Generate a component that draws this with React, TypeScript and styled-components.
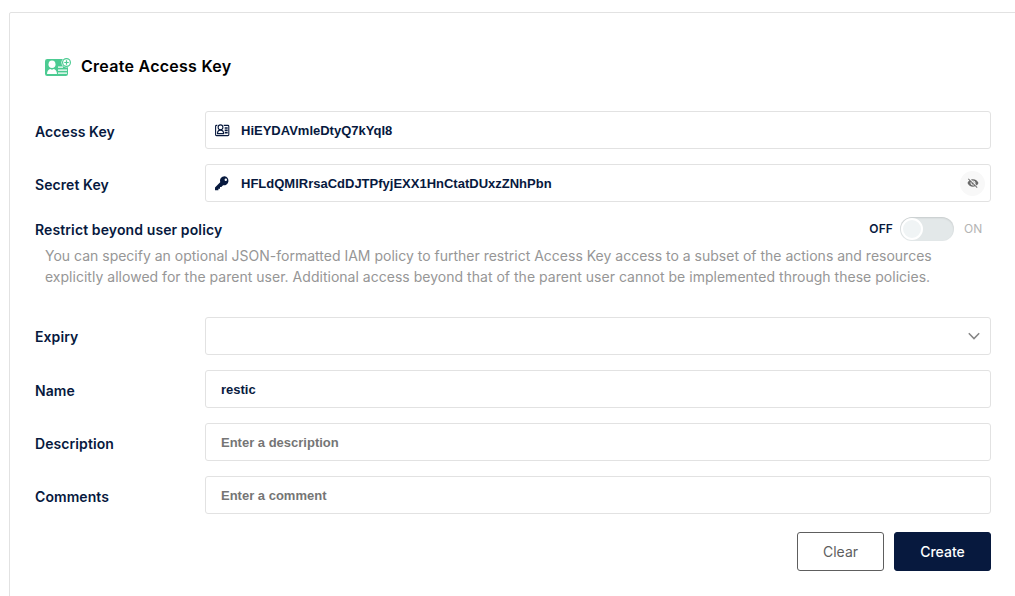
import React from "react";
import styled, { createGlobalStyle } from "styled-components";

const Global = createGlobalStyle`
  * { box-sizing: border-box; }
  html, body { margin: 0; background: #fff; overflow: hidden; }
  body { font-family: Inter, "Liberation Sans", sans-serif; color: #07193e; }
`;

const Page = styled.main`
  height: 596px;
  padding: 12px 0 0 9px;
  overflow: hidden;
`;

const Card = styled.section`
  width: 1100px;
  height: 640px;
  padding: 38px 0 0 25px;
  border: 1px solid #e2e2e2;
  border-radius: 2px;
`;

const Form = styled.form`
  width: 956px;
`;

const Title = styled.h1`
  display: flex;
  align-items: center;
  gap: 10px;
  height: 30px;
  margin: 0 0 30px;
  padding-left: 10px;
  font-size: 16px;
  font-weight: 600;
  letter-spacing: 0.27px;
  color: #000;
`;

const TitleIcon = styled.svg`
  margin-top: 2px;
`;

const Field = styled.div`
  display: flex;
  align-items: center;
  height: 38px;
  margin-bottom: 15px;
`;

const Label = styled.label<{ $raised?: boolean }>`
  width: 170px;
  padding-top: ${(p) => (p.$raised ? 1 : 3)}px;
  font-size: 14px;
  line-height: 20px;
  font-weight: 600;
  letter-spacing: 0.08px;
`;

const Box = styled.div<{ $icon?: boolean }>`
  flex: 1;
  display: flex;
  align-items: center;
  height: 38px;
  padding: 0 5px 0 ${(p) => (p.$icon ? 9 : 15)}px;
  border: 1px solid #e2e2e2;
  border-radius: 3px;
`;

const Input = styled.input<{ $indent?: boolean }>`
  flex: 1;
  min-width: 0;
  height: 20px;
  margin: 0 0 0 ${(p) => (p.$indent ? 11 : 0)}px;
  padding: 0;
  border: 0;
  outline: 0;
  background: transparent;
  color: #07193e;
  font: 600 13px "Liberation Sans", Arial, sans-serif;
  &::placeholder { color: #757575; opacity: 1; }
`;

const EyeButton = styled.button`
  display: flex;
  align-items: center;
  justify-content: center;
  width: 25px;
  height: 25px;
  padding: 0;
  border: 0;
  border-radius: 50%;
  background: #f8f8f8;
  color: #6b6b6b;
`;

const Chevron = styled.svg`
  margin: 0 5px 0 auto;
`;

const PolicyRow = styled.div`
  display: flex;
  align-items: center;
  height: 24px;
  font-size: 14px;
  font-weight: 600;
`;

const PolicyLabel = styled.span`
  flex: 1;
  padding-top: 1px;
  letter-spacing: 0.11px;
`;

const State = styled.span<{ $active?: boolean }>`
  padding-bottom: 1px;
  font-size: 12px;
  line-height: 15px;
  letter-spacing: 0.1px;
  font-weight: ${(p) => (p.$active ? 600 : 400)};
  color: ${(p) => (p.$active ? "#07193e" : "#b4b4b4")};
`;

const Switch = styled.button`
  display: flex;
  align-items: center;
  width: 54px;
  height: 24px;
  margin: 0 10px 0 7px;
  padding: 0 1px;
  border: 0;
  border-radius: 12px;
  background: #e3e8e9;
  box-shadow: inset 0 1px 2px rgba(0, 0, 0, 0.13);
`;

const Thumb = styled.span`
  width: 22px;
  height: 22px;
  border: 2px solid #fff;
  border-radius: 50%;
  background: #f0f4f5;
`;

const OnSlot = styled.div`
  display: flex;
  width: 27px;
`;

const Help = styled.p`
  height: 72px;
  margin: 4px 0 0;
  padding: 0 0 0 10px;
  color: #969696;
  font-size: 14px;
  line-height: 21px;
`;

const HelpLine = styled.span<{ $wide?: boolean }>`
  display: block;
  white-space: nowrap;
  letter-spacing: ${(p) => (p.$wide ? "0.02px" : "normal")};
`;

const Actions = styled.div`
  display: flex;
  justify-content: flex-end;
  gap: 10px;
  padding-top: 3px;
`;

const Button = styled.button<{ $primary?: boolean }>`
  width: ${(p) => (p.$primary ? 97 : 87)}px;
  height: 39px;
  padding: 0;
  border: 1px solid ${(p) => (p.$primary ? "#07193e" : "#5e5e5e")};
  border-radius: 3px;
  background: ${(p) => (p.$primary ? "#07193e" : "#fff")};
  color: ${(p) => (p.$primary ? "#fff" : "#5e5e5e")};
  font-family: inherit;
  font-size: 14px;
  font-weight: ${(p) => (p.$primary ? 500 : 400)};
`;

const CreateKeyIcon = () => (
  <TitleIcon width="26" height="20" viewBox="0 0 26 20">
    <rect y="2" width="23" height="17" rx="2.2" fill="#4ccb92" />
    <circle cx="21.5" cy="5.5" r="5.1" fill="#fff" />
    <circle cx="21.5" cy="5.5" r="3.9" fill="none" stroke="#4ccb92" strokeWidth="1.2" />
    <path d="M21.5 3.3v4.4M19.3 5.5h4.4" stroke="#4ccb92" strokeWidth="1.2" />
    <ellipse cx="7" cy="7.2" rx="3.5" ry="3.8" fill="#fff" />
    <path d="M2 17c0-2.9 1.7-4.7 3.2-4.9l1.8.7 1.8-.7c1.5.2 3.2 2 3.2 4.9z" fill="#fff" />
    <path d="M13 10.2h5M13 13.2h9M13 16.2h9" stroke="#fff" strokeWidth="1.3" />
  </TitleIcon>
);

const CardIcon = () => (
  <svg width="15" height="13" viewBox="0 0 15 13" fill="none" stroke="#07193e">
    <path d="M2.3 1.4h-.8q-.9 0-.9.9v8.4q0 .9.9.9h11.4q.9 0 .9-.9V2.3q0-.9-.9-.9H8.7" strokeWidth="1.1" />
    <circle cx="5.5" cy="3.3" r="2.4" strokeWidth="1.1" />
    <path d="M2.5 9.6c0-2.2 1-3.5 3-3.5s3.1 1.3 3.1 3.5z" strokeWidth="1.1" />
    <path d="M9.7 4h3M9.7 6.4h3M9.7 8.8h3" strokeWidth="1.6" />
  </svg>
);

const KeyIcon = () => (
  <svg width="15" height="15" viewBox="0 0 15 15">
    <path
      fillRule="evenodd"
      fill="#07193e"
      d="M9.6.2A4.6 4.6 0 0 0 5.2 6.3L0 11.5v2.8h3.4v-1.6H5v-1.6h1.3l1.8-1.8A4.6 4.6 0 1 0 9.6.2m1.2 2.4a1.2 1.2 0 1 1 0 2.4 1.2 1.2 0 0 1 0-2.4"
    />
  </svg>
);

const EyeOffIcon = () => (
  <svg width="12" height="12" viewBox="0 0 24 24" fill="currentColor">
    <path d="M12 7c2.76 0 5 2.24 5 5 0 .65-.13 1.26-.36 1.83l2.92 2.92c1.51-1.26 2.7-2.89 3.43-4.75-1.73-4.39-6-7.5-11-7.5-1.4 0-2.74.25-3.98.7l2.16 2.16C10.74 7.13 11.35 7 12 7zM2 4.27l2.28 2.28.46.46C3.08 8.3 1.78 10.02 1 12c1.73 4.39 6 7.5 11 7.5 1.55 0 3.03-.3 4.38-.84l.42.42L19.73 22 21 20.73 3.27 3 2 4.27zM7.53 9.8l1.55 1.55c-.05.21-.08.43-.08.65 0 1.66 1.34 3 3 3 .22 0 .44-.03.65-.08l1.55 1.55c-.67.33-1.41.53-2.2.53-2.76 0-5-2.24-5-5 0-.79.2-1.53.53-2.2zm4.31-.78l3.15 3.15.02-.16c0-1.66-1.34-3-3-3l-.17.01z" />
  </svg>
);

export default function App() {
  return (
    <>
      <Global />
      <Page>
        <Card>
          <Form onSubmit={(e) => e.preventDefault()}>
            <Title><CreateKeyIcon />Create Access Key</Title>
            <Field>
              <Label htmlFor="access">Access Key</Label>
              <Box $icon><CardIcon /><Input id="access" $indent defaultValue="HiEYDAVmleDtyQ7kYqI8" /></Box>
            </Field>
            <Field>
              <Label htmlFor="secret">Secret Key</Label>
              <Box $icon>
                <KeyIcon />
                <Input id="secret" $indent defaultValue="HFLdQMlRrsaCdDJTPfyjEXX1HnCtatDUxzZNhPbn" />
                <EyeButton type="button" aria-label="Show or hide the secret"><EyeOffIcon /></EyeButton>
              </Box>
            </Field>
            <PolicyRow>
              <PolicyLabel>Restrict beyond user policy</PolicyLabel>
              <State $active>OFF</State>
              <Switch type="button" role="switch" aria-checked="false"><Thumb /></Switch>
              <OnSlot><State>ON</State></OnSlot>
            </PolicyRow>
            <Help>
              <HelpLine>You can specify an optional JSON-formatted IAM policy to further restrict Access Key access to a subset of the actions and resources</HelpLine>
              <HelpLine $wide>explicitly allowed for the parent user. Additional access beyond that of the parent user cannot be implemented through these policies.</HelpLine>
            </Help>
            <Field>
              <Label $raised>Expiry</Label>
              <Box>
                <Chevron width="12" height="8" viewBox="0 0 12 8" fill="none" stroke="#858585" strokeWidth="1.5">
                  <path d="M.8 1.2 6 6.6l5.2-5.4" />
                </Chevron>
              </Box>
            </Field>
            <Field>
              <Label htmlFor="name">Name</Label>
              <Box><Input id="name" defaultValue="restic" /></Box>
            </Field>
            <Field>
              <Label htmlFor="description">Description</Label>
              <Box><Input id="description" placeholder="Enter a description" /></Box>
            </Field>
            <Field>
              <Label htmlFor="comments">Comments</Label>
              <Box><Input id="comments" placeholder="Enter a comment" /></Box>
            </Field>
            <Actions>
              <Button type="button">Clear</Button>
              <Button $primary>Create</Button>
            </Actions>
          </Form>
        </Card>
      </Page>
    </>
  );
}
